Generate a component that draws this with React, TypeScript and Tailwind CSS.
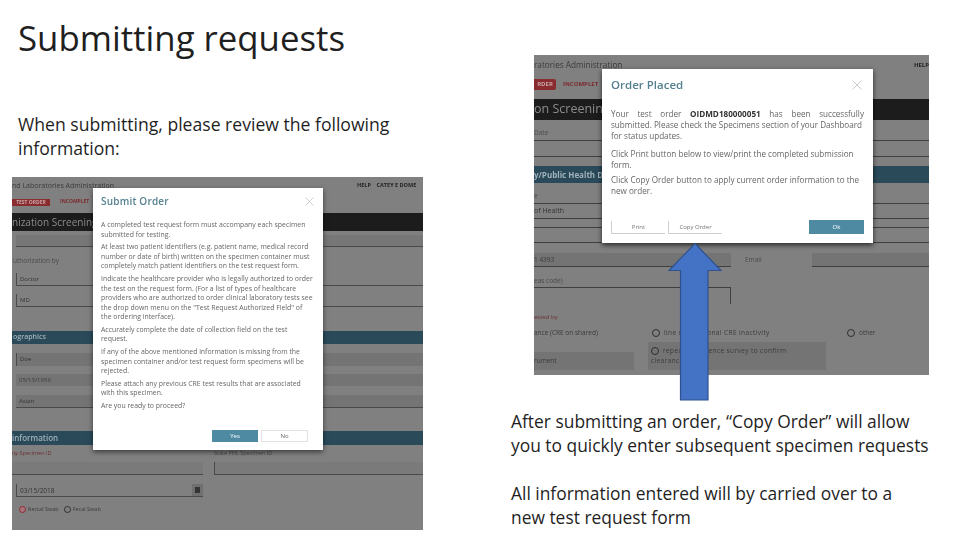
const font = "font-['Open_Sans',sans-serif]";

function Band({ className, children }: { className: string; children?: React.ReactNode }) {
  return <div className={`flex items-center shrink-0 ${className}`}>{children}</div>;
}

function Radio({ checked, large }: { checked?: boolean; large?: boolean }) {
  return (
    <span className={`inline-block rounded-full border shrink-0 ${large ? 'w-[8px] h-[8px]' : 'w-[7px] h-[7px]'} ${checked ? 'border-[#8e2a33] bg-[#a8737a]' : 'border-[#2f2f2f]'}`} />
  );
}

function CloseIcon({ size }: { size: number }) {
  return (
    <svg width={size} height={size} viewBox="0 0 10 10" className="shrink-0">
      <path d="M0.5 0.5 L9.5 9.5 M9.5 0.5 L0.5 9.5" stroke="#bdbdbd" strokeWidth="0.8" fill="none" />
    </svg>
  );
}

function SubmitShot() {
  return (
    <div className="relative w-[411px] h-[353px] bg-[#808080] overflow-hidden text-[#2e2e2e] blur-[0.4px]">
      <div className="flex justify-between pt-[4px] h-[16px] text-[7px] leading-[9px]">
        <span className="text-[#3a3a3a]">nd Laboratories Administration</span>
        <span className="font-bold text-[5.5px] text-[#222] whitespace-nowrap w-[66px] overflow-hidden">HELP&nbsp;&nbsp;&nbsp;&nbsp;CATEY E DOME</span>
      </div>
      <div className="flex items-center h-[10px] mt-[4px] gap-[10px] text-[5px] font-bold">
        <span className="bg-[#8a2b30] text-[#c9a5a5] w-[38px] h-[7px] leading-[7px] text-center">TEST ORDER</span>
        <span className="text-[#7c2a2e]">INCOMPLET</span>
      </div>
      <Band className="h-[18px] mt-[6px] bg-[#1c1c1c] text-[#8c8c8c] text-[10px]">nization Screening</Band>
      <div className="h-[12px] mt-[4px] ml-[4px] bg-[#777] border-b border-[#4a4a4a]" />
      <div className="h-[26px] pt-[9px] pl-[1px] text-[6.5px] leading-[9px] text-[#4a4a4a]">uthorization by</div>
      <Band className="h-[13px] ml-[4px] border-l border-b border-[#4a4a4a] pl-[3px] text-[6px] text-[#333]">Doctor</Band>
      <Band className="h-[13px] mt-[8px] ml-[4px] border-l border-b border-[#4a4a4a] pl-[3px] text-[6px] text-[#333]">MD</Band>
      <Band className="h-[13px] mt-[24px] bg-[#2a4a5a] text-[#a2b2ba] text-[7px] font-semibold pl-[1px]">ographics</Band>
      <Band className="h-[13px] mt-[9px] ml-[4px] bg-[#747474] border-l border-[#4a4a4a] pl-[3px] text-[6px] text-[#333]">Doe</Band>
      <Band className="h-[12px] mt-[8px] ml-[4px] bg-[#747474] pl-[3px] text-[6px] text-[#3a3a3a]">05/13/1956</Band>
      <Band className="h-[13px] mt-[9px] ml-[4px] bg-[#747474] border-b border-[#4a4a4a] pl-[3px] text-[6px] text-[#333]">Asian</Band>
      <Band className="h-[14px] mt-[23px] bg-[#2a4a5a] text-[#a2b2ba] text-[8px] font-semibold">information</Band>
      <div className="flex h-[17px] items-center text-[5.5px] text-[#6b2f33]">
        <span className="w-[202px]">ity Specimen ID</span>
        <span className="text-[#4a4a4a] font-normal">State PHL Specimen ID</span>
      </div>
      <div className="flex gap-[11px] h-[13px]">
        <div className="w-[191px] border-b border-[#4a4a4a] bg-[#7a7a7a]" />
        <div className="flex-1 border-l border-b border-[#4a4a4a] bg-[#7a7a7a]" />
      </div>
      <div className="flex h-[13px] mt-[9px] ml-[4px] w-[187px] justify-between border-l border-b border-[#4a4a4a]">
        <span className="pl-[3px] text-[6.5px] leading-[13px] text-[#333]">03/15/2018</span>
        <span className="flex items-center justify-center w-[11px] bg-[#6f6f6f]">
          <span className="block w-[5px] h-[6px] bg-[#333]" />
        </span>
      </div>
      <div className="flex items-center gap-[2px] mt-[8px] ml-[7px] text-[5.5px] text-[#3c3c3c]">
        <Radio checked />
        <span className="mr-[3px]">Rectal Swab</span>
        <Radio />
        <span>Fecal Swab</span>
      </div>

      {/* modal */}
      <div className="absolute left-[81px] top-[11px] w-[230px] h-[262px] bg-white shadow-[0_2px_5px_rgba(0,0,0,0.55)] px-[8px] flex flex-col">
        <div className="flex items-center justify-between pr-[1px] h-[26px]">
          <span className="text-[#54808f] text-[10px] font-semibold tracking-[0.2px]">Submit Order</span>
          <CloseIcon size={9} />
        </div>
        <div className="flex flex-col gap-[3.3px] mt-[6px] text-[#666] text-[6.9px] leading-[9.5px]">
          <p>A completed test request form must accompany each specimen<br />submitted for testing.</p>
          <p>At least two patient identifiers (e.g. patient name, medical record<br />number or date of birth) written on the specimen container must<br />completely match patient identifiers on the test request form.</p>
          <p>Indicate the healthcare provider who is legally authorized to order<br />the test on the request form. (For a list of types of healthcare<br />providers who are authorized to order clinical laboratory tests see<br />the drop down menu on the "Test Request Authorized Field" of<br />the ordering interface).</p>
          <p>Accurately complete the date of collection field on the test<br />request.</p>
          <p>If any of the above mentioned information is missing from the<br />specimen container and/or test request form specimens will be<br />rejected.</p>
          <p>Please attach any previous CRE test results that are associated<br />with this specimen.</p>
          <p>Are you ready to proceed?</p>
        </div>
        <div className="mt-auto mb-[8px] flex justify-end gap-[3px] pr-[7px]">
          <div className="w-[46px] h-[12px] bg-[#4f8aa3] text-white text-[6px] leading-[12px] text-center">Yes</div>
          <div className="w-[47px] h-[12px] border border-[#e2e2e2] text-[#666] text-[6px] leading-[10px] text-center">No</div>
        </div>
      </div>
    </div>
  );
}

function PlacedShot() {
  return (
    <div className="relative w-[395px] h-[320px] bg-[#808080] overflow-hidden text-[#2e2e2e] blur-[0.4px]">
      <div className="flex justify-between pt-[5px] h-[18px] text-[8.2px] leading-[10px]">
        <span className="text-[#3a3a3a]">ratories Administration</span>
        <span className="font-bold text-[6px] text-[#222]">HELP</span>
      </div>
      <div className="flex items-center h-[11px] mt-[6px] gap-[7px] text-[6px] font-bold">
        <span className="bg-[#8a2b30] text-[#c9a5a5] w-[22px] h-[11px] leading-[11px] text-center rounded-r-[2px]">RDER</span>
        <span className="text-[#7c2a2e]">INCOMPLET</span>
      </div>
      <Band className="h-[21px] mt-[9px] bg-[#1c1c1c] text-[#8c8c8c] text-[12.5px]">on Screening</Band>
      <div className="h-[21px] pt-[8px] text-[6.5px] leading-[9px] text-[#4a4a4a] border-b border-[#3f3f3f]">Date</div>
      <div className="h-[16px] border-b border-[#3f3f3f]" />
      <Band className="h-[17px] mt-[9px] bg-[#2a4a5a] text-[#a2b2ba] text-[8px] font-bold">y/Public Health D</Band>
      <div className="h-[21px] pt-[8px] text-[6.5px] leading-[9px] text-[#4a4a4a] border-b border-[#3f3f3f]">e</div>
      <div className="h-[15px] pt-[2px] text-[7px] leading-[10px] text-[#333] border-b border-[#3f3f3f]">of Health</div>
      <div className="h-[9px] border-b border-[#3f3f3f]" />
      <div className="h-[15px] border-b border-[#3f3f3f]" />
      <div className="flex h-[14px] mt-[10px] gap-[14px] text-[6.5px] leading-[14px]">
        <div className="w-[197px] bg-[#747474] border-b border-[#3f3f3f] text-[#3a3a3a]">1 4393</div>
        <div className="w-[53px] text-[#4a4a4a]">Email</div>
        <div className="flex-1 bg-[#747474] border-b border-[#3f3f3f]" />
      </div>
      <div className="h-[21px] pt-[9px] text-[6.5px] leading-[9px] text-[#4a4a4a] border-b border-[#3f3f3f] w-[197px]">eas code)</div>
      <div className="h-[16px] w-[197px] border-r border-[#3f3f3f]" />
      <div className="h-[22px] pt-[9px] text-[6px] leading-[9px] text-[#6b2f33]">ested by</div>
      <div className="flex items-center h-[14px] text-[6.5px] text-[#3a3a3a]">
        <span className="w-[118px]">ance (CRE on shared)</span>
        <Radio large />
        <span className="ml-[4px] w-[183px] tracking-[0.4px]">line of additional CRE inactivity</span>
        <Radio large />
        <span className="ml-[4px]">other</span>
      </div>
      <div className="flex items-end gap-[14px] h-[28px] mt-[2px] text-[6.5px] text-[#3a3a3a]">
        <div className="w-[100px] h-[18px] bg-[#747474] leading-[18px]">rument</div>
        <div className="w-[178px] h-[28px] bg-[#747474] leading-[10px] pt-[4px] pl-[3px] tracking-[0.4px]">
          <div className="flex items-center gap-[4px]"><Radio large /><span>repeat prevalence survey to confirm</span></div>
          <div>clearance</div>
        </div>
      </div>

      {/* modal */}
      <div className="absolute left-[68px] top-[14px] w-[271px] h-[174px] bg-white shadow-[0_2px_5px_rgba(0,0,0,0.7)] px-[9px] flex flex-col">
        <div className="flex items-center justify-between pt-[6px] pr-[2px] h-[26px]">
          <span className="text-[#54808f] text-[11.5px] font-semibold">Order Placed</span>
          <CloseIcon size={10} />
        </div>
        <div className="flex flex-col gap-[4px] mt-[14px] text-[#666] text-[8.15px] leading-[10.8px]">
          <p>
            <span className="block [text-align-last:justify]">Your test order <b className="text-[#333]">OIDMD180000051</b> has been successfully</span>
            submitted. Please check the Specimens section of your Dashboard<br />for status updates.
          </p>
          <p className="mt-[4px]">Click Print button below to view/print the completed submission<br />form.</p>
          <p>Click Copy Order button to apply current order information to the<br />new order.</p>
        </div>
        <div className="mt-auto mb-[9px] flex items-end gap-[3px]">
          <div className="w-[54px] h-[13px] border-b border-l border-[#cfcfcf] text-[#777] text-[6px] leading-[12px] text-center">Print</div>
          <div className="w-[54px] h-[13px] border-b border-l border-[#cfcfcf] text-[#777] text-[6px] leading-[12px] text-center">Copy Order</div>
          <div className="ml-auto w-[55px] h-[14px] bg-[#4f8aa3] text-white text-[6px] leading-[14px] text-center">Ok</div>
        </div>
      </div>
    </div>
  );
}

export default function App() {
  return (
    <div className={`relative flex w-[960px] h-[540px] overflow-hidden bg-white text-[#1f1f1f] ${font}`}>
      <div className="w-[511px] shrink-0 flex flex-col">
        <h1 className="ml-[18px] mt-[14px] text-[34.8px] leading-[48px] font-normal whitespace-nowrap">Submitting requests</h1>
        <p className="ml-[18px] mt-[50px] text-[17.6px] leading-[24px]">When submitting, please review the following<br />information:</p>
        <div className="ml-[12px] mt-[17px]"><SubmitShot /></div>
      </div>
      <div className="flex-1 flex flex-col">
        <div className="ml-[23px] mt-[55px]"><PlacedShot /></div>
        <p className="mt-[34px] text-[17.4px] leading-[24px] whitespace-nowrap">After submitting an order, “Copy Order” will allow<br />you to quickly enter subsequent specimen requests</p>
        <p className="mt-[24px] text-[17.4px] leading-[24px] whitespace-nowrap">All information entered will by carried over to a<br />new test request form</p>
      </div>
      {/* arrow */}
      <svg width="56" height="160" viewBox="0 0 56 160" className="absolute left-[667px] top-[242px]">
        <path d="M28 1.5 L54 28.5 L41 28.5 L41 158 L13.5 158 L13.5 28.5 L2 28.5 Z" fill="#4472c4" stroke="#2f528f" strokeWidth="1.2" />
      </svg>
    </div>
  );
}
